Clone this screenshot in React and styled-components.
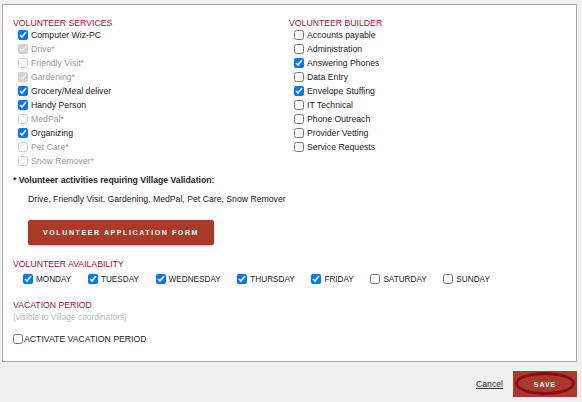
import React from "react";
import styled, { createGlobalStyle } from "styled-components";

const GlobalStyle = createGlobalStyle`
  html, body {
    margin: 0;
    padding: 0;
    background: #f0f0f0;
    font-family: "Liberation Sans", Arial, sans-serif;
    color: #222;
  }
`;

const Page = styled.div`
  width: 582px;
  height: 402px;
  overflow: hidden;
`;

const Panel = styled.div`
  box-sizing: border-box;
  margin: 4px 0 0 2px;
  width: 575px;
  height: 358px;
  background: #fff;
  border: 1px solid #a9a9a9;
  padding: 13px 10px 0 10px;
`;

const Columns = styled.div`
  display: grid;
  grid-template-columns: 276px 1fr;
`;

const Heading = styled.div`
  font-size: 8.7px;
  line-height: 10px;
  color: #a3102b;
  text-transform: uppercase;
  margin-top: ${(p) => p.$top || 0}px;
`;

const List = styled.div`
  display: flex;
  flex-direction: column;
  padding-left: 5px;
`;

const Row = styled.label`
  display: flex;
  align-items: center;
  height: 14px;
  font-size: 8.7px;
  color: ${(p) => (p.$disabled ? "#9a9a9a" : "#222")};
`;

const Box = styled.input.attrs({ type: "checkbox", readOnly: true })`
  width: 10px;
  height: 10px;
  margin: 0 3px 0 0;
  flex: none;
`;

const Note = styled.div`
  font-size: 8.7px;
  line-height: 14px;
  font-weight: bold;
  margin-top: 5px;
`;

const Plain = styled.div`
  font-size: 8.7px;
  line-height: 14px;
  margin: 5px 0 0 15px;
`;

const FormButton = styled.button`
  display: block;
  margin: 14px 0 0 15px;
  width: 186px;
  height: 25px;
  border: none;
  border-radius: 2px;
  background: #a93a29;
  box-shadow: 0 1px 2px rgba(0, 0, 0, 0.25);
  color: #fff;
  font-family: inherit;
  font-size: 7px;
  font-weight: bold;
  letter-spacing: 1.6px;
  text-transform: uppercase;
`;

const Days = styled.div`
  display: flex;
  margin: 3px 0 0 10px;
  gap: 16.6px;
`;

const DayRow = styled(Row)`
  font-size: 8.2px;
  text-transform: uppercase;
`;

const Hint = styled.div`
  font-size: 8.4px;
  line-height: 10px;
  color: #b8b8b8;
  margin-top: 2px;
`;

const Activate = styled(Row)`
  margin-top: 10px;
  text-transform: uppercase;

  input {
    margin-right: 1px;
  }
`;

const Footer = styled.div`
  display: flex;
  justify-content: flex-end;
  align-items: center;
  gap: 10px;
  padding: 9px 5px 0 0;
`;

const CancelLink = styled.a`
  font-size: 8.7px;
  color: #333;
  text-decoration: underline;
  cursor: pointer;
`;

const SaveButton = styled.button`
  position: relative;
  width: 64px;
  height: 26px;
  border: none;
  background: #a93a29;
  color: #fff;
  font-family: inherit;
  font-size: 7px;
  font-weight: bold;
  letter-spacing: 1px;
  padding: 0;

  &::after {
    content: "";
    position: absolute;
    inset: 1px 2px 2px 2px;
    border: 3px solid #8b0a1c;
    border-radius: 50%;
  }
`;

const services = [
  ["Computer Wiz-PC", true, false],
  ["Drive*", true, true],
  ["Friendly Visit*", false, true],
  ["Gardening*", true, true],
  ["Grocery/Meal deliver", true, false],
  ["Handy Person", true, false],
  ["MedPal*", false, true],
  ["Organizing", true, false],
  ["Pet Care*", false, true],
  ["Snow Remover*", false, true],
];

const builder = [
  ["Accounts payable", false],
  ["Administration", false],
  ["Answering Phones", true],
  ["Data Entry", false],
  ["Envelope Stuffing", true],
  ["IT Technical", false],
  ["Phone Outreach", false],
  ["Provider Vetting", false],
  ["Service Requests", false],
];

const days = [
  ["Monday", true],
  ["Tuesday", true],
  ["Wednesday", true],
  ["Thursday", true],
  ["Friday", true],
  ["Saturday", false],
  ["Sunday", false],
];

export default function App() {
  return (
    <Page>
      <GlobalStyle />
      <Panel>
        <Columns>
          <div>
            <Heading>Volunteer Services</Heading>
            <List>
              {services.map(([name, checked, disabled]) => (
                <Row key={name} $disabled={disabled}>
                  <Box checked={checked} disabled={disabled} />
                  {name}
                </Row>
              ))}
            </List>
          </div>
          <div>
            <Heading>Volunteer Builder</Heading>
            <List>
              {builder.map(([name, checked]) => (
                <Row key={name}>
                  <Box checked={checked} />
                  {name}
                </Row>
              ))}
            </List>
          </div>
        </Columns>

        <Note>* Volunteer activities requiring Village Validation:</Note>
        <Plain>Drive, Friendly Visit, Gardening, MedPal, Pet Care, Snow Remover</Plain>
        <FormButton>Volunteer Application Form</FormButton>

        <Heading $top={14}>Volunteer Availability</Heading>
        <Days>
          {days.map(([day, checked]) => (
            <DayRow key={day}>
              <Box checked={checked} />
              {day}
            </DayRow>
          ))}
        </Days>

        <Heading $top={14}>Vacation Period</Heading>
        <Hint>(visible to Village coordinators)</Hint>
        <Activate>
          <Box checked={false} />
          Activate vacation period
        </Activate>
      </Panel>
      <Footer>
        <CancelLink>Cancel</CancelLink>
        <SaveButton>SAVE</SaveButton>
      </Footer>
    </Page>
  );
}
